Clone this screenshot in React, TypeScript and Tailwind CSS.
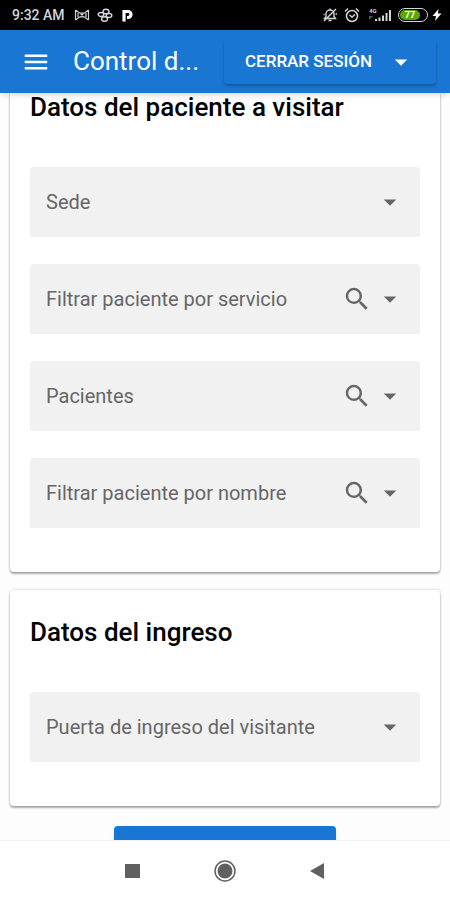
import type { ReactNode } from 'react';

type Field = { id: string; label: string; search?: boolean };

const patientFields: Field[] = [
  { id: 'sede', label: 'Sede' },
  { id: 'servicio', label: 'Filtrar paciente por servicio', search: true },
  { id: 'pacientes', label: 'Pacientes', search: true },
  { id: 'nombre', label: 'Filtrar paciente por nombre', search: true },
];

const entryFields: Field[] = [{ id: 'puerta', label: 'Puerta de ingreso del visitante' }];

function Icon({ d, className }: { d: string; className?: string }) {
  return (
    <svg viewBox="0 0 24 24" className={`size-[30px] shrink-0 fill-current ${className ?? ''}`} aria-hidden="true">
      <path d={d} />
    </svg>
  );
}

const MENU = 'M3 6h18v2H3V6m0 5h18v2H3v-2m0 5h18v2H3v-2z';
const CARET = 'M7 10l5 5 5-5H7z';
const MAGNIFY =
  'M9.5 3A6.5 6.5 0 0 1 16 9.5c0 1.61-.59 3.09-1.56 4.23l.27.27h.79l5 5-1.5 1.5-5-5v-.79l-.27-.27A6.52 6.52 0 0 1 9.5 16a6.5 6.5 0 0 1 0-13m0 2C7 5 5 7 5 9.5S7 14 9.5 14 14 12 14 9.5 12 5 9.5 5z';

function StatusBar() {
  return (
    <div className="flex h-[30px] shrink-0 items-center bg-black pr-2 pl-3 text-gray-300">
      <span className="text-sm font-medium">9:32 AM</span>
      <svg viewBox="0 0 16 16" className="ml-[9px] size-4 fill-none stroke-current" strokeWidth="1.2" aria-hidden="true">
        <path d="M1.5 3v10M14.5 3v10M1.5 3l4 3h5l4-3M1.5 13l4-3h5l4 3M4 6v4M12 6v4M6.5 6.5l3 3M9.5 6.5l-3 3" />
      </svg>
      <svg viewBox="0 0 16 16" className="ml-[7px] size-4 fill-none stroke-current" strokeWidth="1.4" aria-hidden="true">
        <ellipse cx="9" cy="4.5" rx="3" ry="2.3" />
        <ellipse cx="12" cy="8.5" rx="2.8" ry="2" />
        <ellipse cx="7.5" cy="12" rx="3" ry="2.3" />
        <ellipse cx="4" cy="7.5" rx="2.8" ry="2" />
      </svg>
      <svg viewBox="0 0 16 16" className="ml-[7px] size-4 fill-none stroke-white" strokeWidth="3.2" aria-hidden="true">
        <path d="M4 14.5V4.500h4a3 3 0 0 1 0 6H7" />
      </svg>
      <svg viewBox="0 0 16 16" className="ml-auto size-4 fill-none stroke-current" strokeWidth="1.4" aria-hidden="true">
        <path d="M2.5 11.5h11L12 9.5V7a4 4 0 0 0-8 0v2.5zM6.5 13.5h3M8 1.5V3M2 14L14 2M1.5 7.5h1M13.5 7H15" />
      </svg>
      <svg viewBox="0 0 16 16" className="ml-[6px] size-4 fill-none stroke-current" strokeWidth="1.5" aria-hidden="true">
        <circle cx="8" cy="9" r="5.5" />
        <path d="M1 4.5l3-3M15 4.5l-3-3M5.5 8L8 10l3-2.5" />
      </svg>
      <svg viewBox="0 0 26 16" className="ml-2 h-4 w-[26px] fill-current" aria-hidden="true">
        <text x="1" y="6" fontSize="6" fontWeight="700">4G</text>
        <path d="M1 9h4l-4 4z" opacity=".4" />
        <path d="M7 12h2v2H7zM10.5 10.5h2V14h-2zM14 8.500h2V14h-2zM17.5 6h2v8h-2zM21 3h2v11h-2z" />
      </svg>
      <div className="ml-1 flex h-[14px] w-[30px] items-center rounded-full border border-gray-300 p-px">
        <span className="flex h-full w-5 items-center justify-center rounded-full bg-lime-600 text-[9px] leading-none font-bold text-white">77</span>
      </div>
      <svg viewBox="0 0 10 14" className="ml-1 h-3.5 w-2.5 fill-white" aria-hidden="true">
        <path d="M6.5 1L.5 8H4l-1 5 6.500-7.500H6z" />
      </svg>
    </div>
  );
}

function SelectField({ id, label, search }: Field) {
  return (
    <div className="relative flex h-[70px] items-center rounded-t bg-[#f1f1f1] px-[15px] text-[#666]">
      <label htmlFor={id} className="pointer-events-none absolute left-4 text-xl">{label}</label>
      {search ? (
        <>
          <input id={id} type="text" className="h-full min-w-0 flex-1 text-xl outline-none" />
          <Icon d={MAGNIFY} className="mr-[3px]" />
        </>
      ) : (
        <select id={id} className="h-full min-w-0 flex-1 appearance-none text-xl outline-none" />
      )}
      <Icon d={CARET} className="pointer-events-none" />
    </div>
  );
}

function Section({ title, fields, className }: { title: string; fields: Field[]; className: string }) {
  return (
    <section className={`bg-white px-5 pb-11 shadow-[0_2px_2px_rgba(0,0,0,0.3),0_0_3px_rgba(0,0,0,0.2)] ${className}`}>
      <h2 className="mb-[46px] text-[26px] leading-7 font-medium whitespace-nowrap text-black">{title}</h2>
      <div className="flex flex-col gap-[27px]">
        {fields.map((f) => (
          <SelectField key={f.id} {...f} />
        ))}
      </div>
    </section>
  );
}

function NavButton({ label, children }: { label: string; children: ReactNode }) {
  return (
    <button type="button" aria-label={label} className="flex size-6 items-center justify-center">
      <svg viewBox="0 0 24 24" className="size-6 fill-[#606060]" aria-hidden="true">{children}</svg>
    </button>
  );
}

export default function App() {
  return (
    <div className="flex h-screen flex-col overflow-hidden bg-[#fdfdfd] font-[Roboto,sans-serif]">
      <StatusBar />
      <header className="relative z-10 flex h-[63px] shrink-0 items-center bg-[#1976d2] pr-[14px] pl-[21px] text-white shadow-md">
        <button type="button" aria-label="Menú">
          <Icon d={MENU} />
        </button>
        <h1 className="ml-[22px] min-w-0 flex-1 text-[26px] whitespace-nowrap">Control d...</h1>
        <button type="button" className="flex h-[45px] w-[212px] items-center rounded pl-[21px] text-[17px] font-medium shadow-[0_2px_3px_rgba(0,0,0,0.25)]">
          CERRAR SESIÓN
          <Icon d={CARET} className="mr-5 ml-auto" />
        </button>
      </header>
      <main className="flex min-h-0 flex-1 flex-col overflow-hidden px-[10px]">
        <Section title="Datos del paciente a visitar" fields={patientFields} className="shrink-0 rounded-b" />
        <Section title="Datos del ingreso" fields={entryFields} className="mt-[18px] shrink-0 rounded pt-7" />
        <button type="button" aria-label="Registrar" className="mx-auto mt-5 h-[45px] w-[222px] shrink-0 rounded bg-[#1976d2] shadow-md" />
      </main>
      <nav className="flex h-[60px] shrink-0 items-center justify-center gap-[68px] border-t border-gray-100 bg-white">
        <NavButton label="Recientes">
          <path d="M4 5h15v14H4z" />
        </NavButton>
        <NavButton label="Inicio">
          <circle cx="12" cy="12" r="10" fill="none" stroke="#606060" strokeWidth="1.5" />
          <circle cx="12" cy="12" r="7.5" />
        </NavButton>
        <NavButton label="Atrás">
          <path d="M19 4v16L5 12z" />
        </NavButton>
      </nav>
    </div>
  );
}
